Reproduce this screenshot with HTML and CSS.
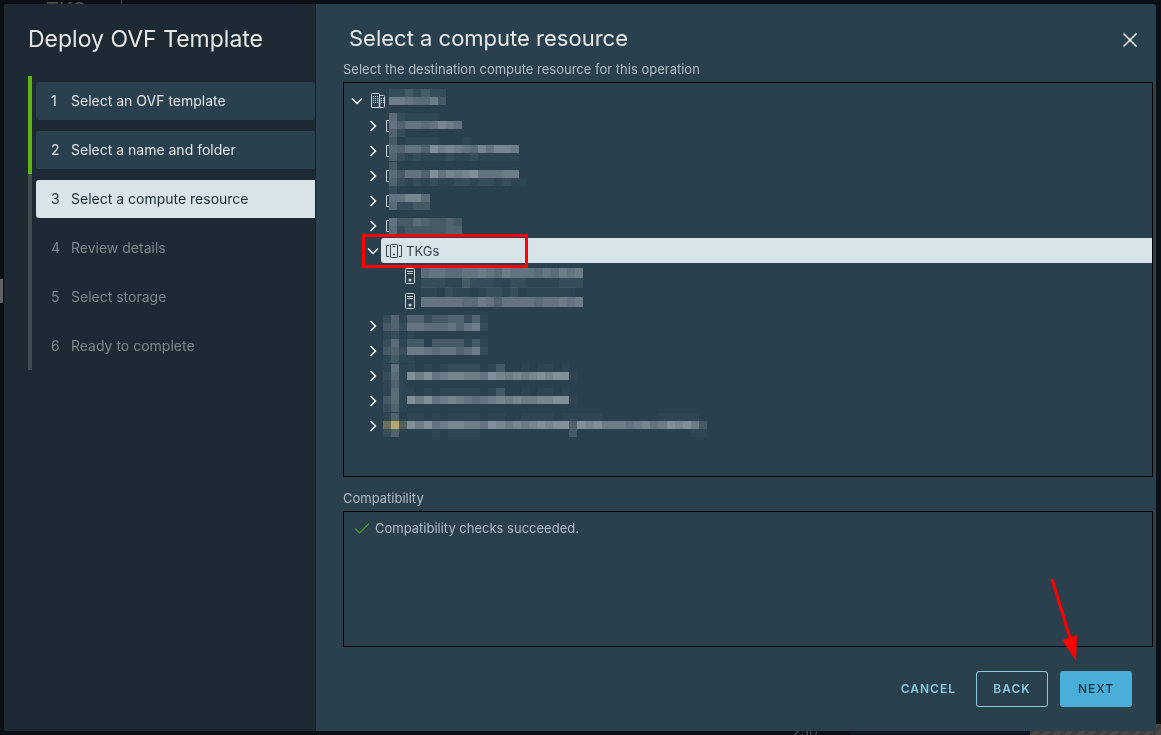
FILE: index.html
```
<!DOCTYPE html>
<html lang="en">
<head>
<meta charset="utf-8">
<meta name="viewport" content="width=device-width, initial-scale=1">
<title>Deploy OVF Template</title>
<link rel="stylesheet" href="styles.css">
</head>
<body>
<svg class="defs" aria-hidden="true">
  <symbol id="down" viewBox="0 0 16 16"><path d="M3 5.500 8 10.500 13 5.500" fill="none" stroke="currentColor" stroke-width="1.500"/></symbol>
  <symbol id="right" viewBox="0 0 16 16"><path d="M5.500 3 10.500 8 5.500 13" fill="none" stroke="currentColor" stroke-width="1.500"/></symbol>
  <symbol id="datacenter" viewBox="0 0 16 16"><g fill="none" stroke="currentColor"><path d="M1.500 1.500q0-1 1-1h6q1 0 1 1v13h-8zM9.500 2.500h4q1 0 1 1v10q0 1-1 1h-4"/><path d="M3 3.500h6M3 5.500h6M3 7.500h6M3 9.500h6M11 5.500h3M11 7.500h3M11 9.500h3" stroke-dasharray="1 1"/><path d="M9.500 5v9" stroke-width="1.500"/></g></symbol>
  <symbol id="cluster" viewBox="0 0 16 16"><g fill="none" stroke="currentColor"><path d="M3 2.500H.5v11H3M13 2.500h2.500v11H13"/><rect x="4.500" y="1.500" width="7" height="13" rx="1"/><path d="M6.500 3.500h3"/></g><circle cx="8" cy="11.500" r="1" fill="currentColor"/></symbol>
  <symbol id="bracket" viewBox="0 0 3 16"><path d="M3 2.500H.5v11H3" fill="none" stroke="currentColor"/></symbol>
  <symbol id="host" viewBox="0 0 16 16"><g fill="none" stroke="currentColor"><rect x="3.500" y=".5" width="9" height="15" rx="1"/><path d="M5 3.500h6M5 5.500h6"/></g><circle cx="8" cy="12" r="1.500" fill="currentColor"/></symbol>
</svg>

<div class="backdrop" aria-hidden="true">
  <span class="backdrop-title">TKGs</span>
  <span class="backdrop-handle"></span>
  <span class="backdrop-value">250</span>
  <span class="backdrop-panel"></span>
  <span class="backdrop-hatch"></span>
</div>

<div class="dialog" role="dialog" aria-labelledby="wizard-title">
  <aside class="sidebar">
    <h1 class="wizard-title" id="wizard-title">Deploy OVF Template</h1>
    <ol class="steps">
      <li class="step done"><button type="button"><span class="num">1</span>Select an OVF template</button></li>
      <li class="step done"><button type="button"><span class="num">2</span>Select a name and folder</button></li>
      <li class="step current"><button type="button" aria-current="step"><span class="num">3</span>Select a compute resource</button></li>
      <li class="step"><button type="button" disabled><span class="num">4</span>Review details</button></li>
      <li class="step"><button type="button" disabled><span class="num">5</span>Select storage</button></li>
      <li class="step"><button type="button" disabled><span class="num">6</span>Ready to complete</button></li>
    </ol>
  </aside>

  <main class="page">
    <header class="page-header">
      <h2>Select a compute resource</h2>
      <button class="close" type="button" aria-label="Close"><svg viewBox="0 0 16 16"><path d="M1.500 1.500l13 13M14.500 1.500l-13 13" stroke="currentColor" stroke-width="1.500"/></svg></button>
    </header>
    <p class="caption">Select the destination compute resource for this operation</p>

    <div class="panel tree-panel">
      <ul class="tree" role="tree">
        <li role="treeitem" aria-expanded="true">
          <div class="row"><button class="toggle" type="button" aria-label="Collapse"><svg><use href="#down"/></svg></button><span class="label"><svg class="icon"><use href="#datacenter"/></svg><svg class="mask" data-top="1" data-cells="2232322/7765573"></svg></span></div>
          <ul role="group">
            <li role="treeitem" aria-expanded="false"><div class="row"><button class="toggle" type="button" aria-label="Expand"><svg><use href="#right"/></svg></button><span class="label"><svg class="edge"><use href="#bracket"/></svg><svg class="mask" data-top="0" data-cells="521111/646656876/42"></svg></span></div></li>
            <li role="treeitem" aria-expanded="false"><div class="row"><button class="toggle" type="button" aria-label="Expand"><svg><use href="#right"/></svg></button><span class="label"><svg class="edge"><use href="#bracket"/></svg><svg class="mask" data-top="-1" data-cells="3011110001/5466497876586887/4212111211211111"></svg></span></div></li>
            <li role="treeitem" aria-expanded="false"><div class="row"><button class="toggle" type="button" aria-label="Expand"><svg><use href="#right"/></svg></button><span class="label"><svg class="edge"><use href="#bracket"/></svg><svg class="mask" data-top="-1" data-cells="3/5366496878966677/42121211221221211"></svg></span></div></li>
            <li role="treeitem" aria-expanded="false"><div class="row"><button class="toggle" type="button" aria-label="Expand"><svg><use href="#right"/></svg></button><span class="label"><svg class="edge"><use href="#bracket"/></svg><svg class="mask" data-top="-2" data-cells="2/66885/52233"></svg></span></div></li>
            <li role="treeitem" aria-expanded="false"><div class="row"><button class="toggle" type="button" aria-label="Expand"><svg><use href="#right"/></svg></button><span class="label"><svg class="edge"><use href="#bracket"/></svg><svg class="mask" data-top="5" data-cells="633543343/523333344"></svg></span></div></li>
            <li role="treeitem" aria-expanded="true" aria-selected="true">
              <div class="row selected"><button class="toggle" type="button" aria-label="Collapse"><svg><use href="#down"/></svg></button><span class="label"><svg class="icon"><use href="#cluster"/></svg>TKGs</span><span class="callout"></span></div>
              <ul role="group">
                <li role="treeitem"><div class="row leaf"><span class="label"><svg class="icon"><use href="#host"/></svg><svg class="mask" data-top="5" data-height="10" data-cells="56655667657666565767/22211322211221111222"></svg></span></div></li>
                <li role="treeitem"><div class="row leaf"><span class="label"><svg class="icon"><use href="#host"/></svg><svg class="mask" data-top="-1" data-height="10" data-cells="11021101221201111110/66666557646666566767"></svg></span></div></li>
              </ul>
            </li>
            <li role="treeitem" aria-expanded="false"><div class="row"><button class="toggle" type="button" aria-label="Expand"><svg><use href="#right"/></svg></button><span class="label covered"><svg class="mask" data-top="2" data-cells="2414423344241/3426655564672/1201"></svg></span></div></li>
            <li role="treeitem" aria-expanded="false"><div class="row"><button class="toggle" type="button" aria-label="Expand"><svg><use href="#right"/></svg></button><span class="label covered"><svg class="mask" data-top="1" data-cells="2513303333131/3427765664572/1311"></svg></span></div></li>
            <li role="treeitem" aria-expanded="false"><div class="row"><button class="toggle" type="button" aria-label="Expand"><svg><use href="#right"/></svg></button><span class="label covered"><svg class="mask" data-top="1" data-cells="161101012222013001011010/251979678877698787898991/141"></svg></span></div></li>
            <li role="treeitem" aria-expanded="false"><div class="row"><button class="toggle" type="button" aria-label="Expand"><svg><use href="#right"/></svg></button><span class="label covered"><svg class="mask" data-top="0" data-cells="151101011111013001011010/351979678765678787788991/241"></svg></span></div></li>
            <li role="treeitem" aria-expanded="false"><div class="row"><button class="toggle" type="button" aria-label="Expand"><svg><use href="#right"/></svg></button><span class="label covered"><svg class="mask" data-top="0" data-cells="1401101011110110011110111110000000111110/xyz9796788776987878989949897776786798973/2400001011110000000000030000000000000011"></svg></span></div></li>
          </ul>
        </li>
      </ul>
    </div>

    <h3 class="caption compat">Compatibility</h3>
    <div class="panel compat-panel">
      <p><svg class="check" viewBox="0 0 16 16"><path d="M1 8.500 5.500 13 15 3.500" fill="none" stroke="currentColor" stroke-width="1.200"/></svg>Compatibility checks succeeded.</p>
    </div>

    <footer class="actions">
      <button class="btn link" type="button">Cancel</button>
      <button class="btn outline" type="button">Back</button>
      <button class="btn primary" type="button">Next</button>
      <svg class="arrow" viewBox="0 0 32 84" aria-hidden="true"><path d="M3 1 21 60" stroke="#f00" stroke-width="3"/><path d="M13 62 28 57 27 83z" fill="#f00"/></svg>
    </footer>
  </main>
</div>
<script src="mask.js"></script>
</body>
</html>
```
FILE: styles.css
```
* { box-sizing: border-box; }

body {
  margin: 0;
  min-height: 100vh;
  display: flex;
  padding: 4px 5px 4px 4px;
  background: #0a1015;
  color: #aebbc4;
  font: 13px/18px Inter, "Open Sans", sans-serif;
  overflow: hidden;
}

button { font: inherit; color: inherit; background: none; border: 0; padding: 0; }
h1, h2, h3, p, ul, ol { margin: 0; padding: 0; font-weight: 400; list-style: none; }
svg { display: block; overflow: visible; }
.defs { position: absolute; width: 0; height: 0; }

/* Dimmed application behind the dialog */
.backdrop { position: fixed; inset: 0; overflow: hidden; color: #4c4f50; }
.backdrop span { position: absolute; }
.backdrop .backdrop-title { top: 0; left: 46px; width: 76px; height: 14px; border-right: 1px solid #42474a; font-size: 20px; line-height: 20px; }
.backdrop .backdrop-handle { left: 0; top: 279px; width: 3px; height: 24px; background: #606263; }
.backdrop .backdrop-value { left: 792px; bottom: -6px; font-size: 14px; }
.backdrop .backdrop-panel { right: 131px; bottom: 0; width: 181px; height: 8px; background: #0d1721; }
.backdrop .backdrop-hatch { right: 0; bottom: 0; width: 131px; height: 11px; background: repeating-linear-gradient(135deg, #4d4a4a 0 4px, #403e3f 4px 8px); }

.dialog {
  position: relative;
  flex: 1;
  display: grid;
  grid-template-columns: 312px minmax(0, 1fr);
  border-radius: 3px;
  overflow: hidden;
  background: #2a404d;
}

.sidebar { background: #1d2a33; border-right: 1px solid #17232c; padding: 18px 0 0 24px; }
.wizard-title { font-size: 23px; line-height: 34px; color: #e4e8ea; margin-bottom: 20px; }

.step { height: 49px; padding: 6px 0 5px 4px; border-left: 4px solid #414c53; color: #7c868c; font-size: 14px; }
.step button { display: flex; align-items: center; width: 100%; height: 38px; padding-left: 15px; border-radius: 3px; text-align: left; }
.num { width: 20px; }
.step.done { border-color: #60b515; color: #e0e6ea; }
.step.done button { background: #2a404d; }
.step.current button { background: #d9e4ea; color: #1b2a32; border-radius: 3px 0 0 3px; }

.page { display: flex; flex-direction: column; padding: 18px 3px 24px 27px; }
.page-header { display: flex; justify-content: space-between; align-items: flex-start; height: 36px; padding: 0 15px 0 6px; }
.page-header h2 { font-size: 22px; line-height: 32px; color: #e4e8ea; }
.close { padding: 10px 0; color: #f3f6f8; }
.close svg { width: 16px; height: 16px; }
.caption { font-size: 13px; line-height: 18px; padding: 2px 0 4px; }
.compat { padding: 12px 0 4px; }

.panel { border: 1px solid #000; }
.tree-panel { flex: 1; padding: 5px 0; }
.tree { padding-left: 5px; }
.tree ul { padding-left: 16px; }
.row { position: relative; display: flex; height: 25px; }
.toggle { width: 16px; color: #eef3f6; }
.toggle svg { width: 16px; height: 16px; }
.label { flex: 1; display: flex; align-items: center; gap: 3px; padding-left: 5px; border-radius: 3px 0 0 3px; color: #c9d3d9; }
.row.leaf { padding-left: 16px; }
.icon { width: 16px; height: 16px; }
.edge { width: 3px; height: 16px; margin-right: -3px; }
.mask { width: 8px; height: 25px; fill: #dfe7ee; shape-rendering: crispEdges; }
.covered { padding-left: 2px; }
.selected .label { background: #d9e4ea; color: #33424b; gap: 4px; }
.callout { position: absolute; left: -3px; top: -4px; width: 166px; height: 34px; border: 3px solid #f00; }

.compat-panel { height: 136px; padding: 7px 10px; }
.compat-panel p { display: flex; align-items: center; gap: 5px; }
.check { width: 16px; height: 16px; color: #4d9a1e; }

.actions { position: relative; display: flex; justify-content: flex-end; gap: 12px; padding: 24px 21px 0 0; }
.btn { height: 36px; padding: 0 7px; border: 1px solid transparent; border-radius: 3px; font-size: 12px; font-weight: 600; letter-spacing: 1px; text-transform: uppercase; color: #89cbdf; }
.btn.outline, .btn.primary { min-width: 72px; }
.btn.outline { border-color: #89cbdf; }
.btn.primary { background: #49afd9; color: #12303f; font-weight: 500; }
.arrow { position: absolute; right: 72px; top: -69px; width: 32px; height: 84px; }
```
FILE: mask.js
```
// Draws the pixelated labels: rows are split by "/", each digit is a cell strength.
const tinted = { x: "#6f7058", y: "#b5a86d", z: "#566359" };
for (const svg of document.querySelectorAll(".mask")) {
  const height = Number(svg.dataset.height || 8);
  svg.dataset.cells.split("/").forEach((line, row) => {
    [...line].forEach((cell, col) => {
      if (cell === "0") return;
      const rect = document.createElementNS("http://www.w3.org/2000/svg", "rect");
      const left = Math.round(col * 8.1);
      rect.setAttribute("x", left);
      rect.setAttribute("y", Number(svg.dataset.top) + row * height);
      rect.setAttribute("width", Math.round((col + 1) * 8.1) - left);
      rect.setAttribute("height", height);
      if (tinted[cell]) rect.setAttribute("fill", tinted[cell]);
      else rect.setAttribute("fill-opacity", cell < 4 ? cell * cell * 0.015 + 0.02 : cell / 19);
      svg.append(rect);
    });
  });
}
```
